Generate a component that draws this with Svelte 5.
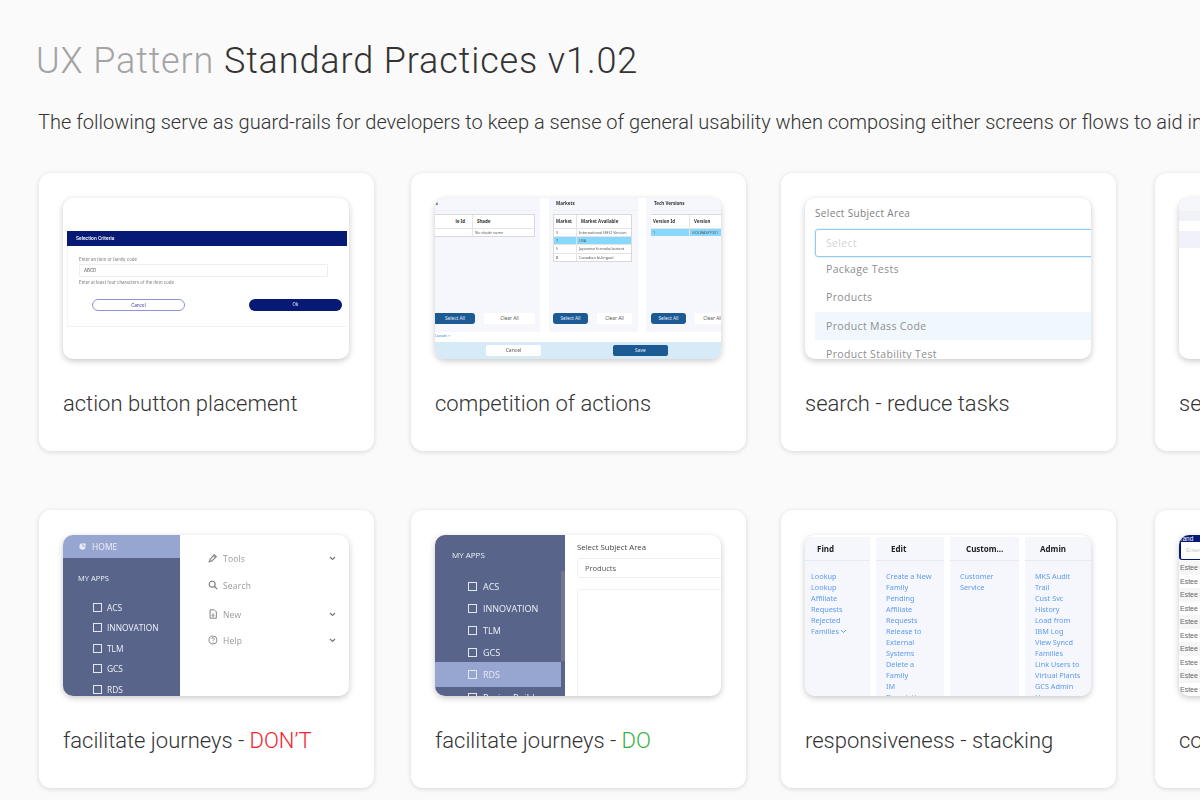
<script>
  const mk1 = [['5','International (EEC) Version',false],['7','USA',true],['5','Japanese formula/variant',false],['8','Canadian bi-lingual',false]];
  const apps1 = ['ACS','INNOVATION','TLM','GCS','RDS'];
  const apps2 = ['ACS','INNOVATION','TLM','GCS','RDS','Recipe Builder'];
  const subjects = ['Package Tests','Products','Product Mass Code','Product Stability Test'];
  const menu = [
    { head: 'Find', w: 'c1', links: ['Lookup','Lookup','Affiliate','Requests','Rejected','Families'] },
    { head: 'Edit', w: 'c2', links: ['Create a New','Family','Pending','Affiliate','Requests','Release to','External','Systems','Delete a','Family','IM','Descriptions'] },
    { head: 'Custom...', w: 'c3', links: ['Customer','Service'] },
    { head: 'Admin', w: 'c4', links: ['MKS Audit','Trail','Cust Svc','History','Load from','IBM Log','View Syncd','Families','Link Users to','Virtual Plants','GCS Admin','Users'] }
  ];
  const estee = Array(10).fill('Estee Lauder');
</script>

<main class="page">
  <h1><span class="dim">UX Pattern</span> Standard Practices v1.02</h1>
  <p class="intro">The following serve as guard-rails for developers to keep a sense of general usability when composing either screens or flows to aid in consistency across applications.</p>

  <section class="grid">
    <article class="card">
      <div class="thumb t1">
        <div class="dlg">
          <div class="dlg-bar">Selection Criteria</div>
          <div class="dlg-body">
            <div class="lbl">Enter an item or family code</div>
            <div class="inp">ABCD</div>
            <div class="lbl hint">Enter at least four characters of the item code</div>
            <div class="btns"><span class="b-cancel">Cancel</span><span class="b-ok">Ok</span></div>
          </div>
        </div>
      </div>
      <h2>action button placement</h2>
    </article>

    <article class="card">
      <div class="thumb t2">
        <div class="panels">
          <div class="panel p1">
            <div class="p-head">a</div>
            <div class="tbl shift">
              <div class="tr th"><span class="td a">le Id</span><span class="td b">Shade</span></div>
              <div class="tr"><span class="td a"></span><span class="td b">No shade name</span></div>
            </div>
            <div class="p-btns"><span class="sel sel1">Select All</span><span class="clr clr1">Clear All</span></div>
          </div>
          <div class="panel p2">
            <div class="p-head">Markets</div>
            <div class="tbl">
              <div class="tr th"><span class="td a">Market</span><span class="td b">Market Available</span></div>
              {#each mk1 as r}
                <div class="tr" class:on={r[2]}><span class="td a">{r[0]}</span><span class="td b">{r[1]}</span></div>
              {/each}
            </div>
            <div class="p-btns"><span class="sel">Select All</span><span class="clr">Clear All</span></div>
          </div>
          <div class="panel p3">
            <div class="p-head">Tech Versions</div>
            <div class="tbl wide">
              <div class="tr th"><span class="td a">Version Id</span><span class="td b">Version</span></div>
              <div class="tr on"><span class="td a">1</span><span class="td b">GOLWASFT001</span></div>
            </div>
            <div class="p-btns"><span class="sel">Select All</span><span class="clr">Clear All</span></div>
          </div>
        </div>
        <div class="t2-link">Cascade >></div>
        <div class="t2-foot"><span class="f-cancel">Cancel</span><span class="f-save">Save</span></div>
      </div>
      <h2>competition of actions</h2>
    </article>

    <article class="card">
      <div class="thumb t3">
        <div class="s-label">Select Subject Area</div>
        <div class="s-input">Select</div>
        <ul class="s-list">
          {#each subjects as s, i}
            <li class:hi={i === 2}>{s}</li>
          {/each}
        </ul>
      </div>
      <h2>search - reduce tasks</h2>
    </article>

    <article class="card">
      <div class="thumb t4">
        <div class="b1"></div><div class="b2"></div><div class="b3"></div><div class="b4"></div>
      </div>
      <h2>search - filter results</h2>
    </article>

    <article class="card">
      <div class="thumb t5">
        <aside class="side5">
          <div class="home">
            <svg width="7" height="7" viewBox="0 0 10 10"><path d="M5 .5a4.500 4.500 0 1 0 4.500 4.500H5z" fill="#e8ebf6"/><path d="M6 0v4h4A4 4 0 0 0 6 0z" fill="#e8ebf6"/></svg>
            HOME
          </div>
          <div class="myapps">MY APPS</div>
          <ul class="apps">
            {#each apps1 as a}<li><i></i>{a}</li>{/each}
          </ul>
        </aside>
        <div class="menu5">
          <div class="mi m-tools">
            <svg width="10" height="10" viewBox="0 0 12 12" fill="none" stroke="#8a8a8a" stroke-width="1.400"><path d="M1.500 10.500l1-3 5-5.500 2.500 2.500-5.500 5z"/><path d="M6.500 3l2.500 2.500"/></svg>
            <span>Tools</span>
            <svg class="chev" width="7" height="5" viewBox="0 0 7 5" fill="none" stroke="#777" stroke-width="1.200"><path d="M1 1l2.500 2.500L6 1"/></svg>
          </div>
          <div class="mi m-search">
            <svg width="10" height="10" viewBox="0 0 12 12" fill="none" stroke="#777" stroke-width="1.300"><circle cx="5" cy="5" r="3.600"/><path d="M7.800 7.800L11 11"/></svg>
            <span>Search</span>
          </div>
          <div class="mi m-new">
            <svg width="10" height="10" viewBox="0 0 12 12" fill="none" stroke="#777" stroke-width="1.100"><path d="M2.500 1h5l2.500 2.500V11h-7.500z"/><path d="M6 5v4M4.500 7.500L6 9l1.500-1.500"/></svg>
            <span>New</span>
            <svg class="chev" width="7" height="5" viewBox="0 0 7 5" fill="none" stroke="#777" stroke-width="1.200"><path d="M1 1l2.500 2.500L6 1"/></svg>
          </div>
          <div class="mi m-help">
            <svg width="10" height="10" viewBox="0 0 12 12" fill="none" stroke="#777" stroke-width="1"><circle cx="6" cy="6" r="4.800"/><path d="M4.500 4.800a1.500 1.500 0 1 1 2.200 1.300c-.5.300-.7.600-.7 1.100M6 8.300v.8"/></svg>
            <span>Help</span>
            <svg class="chev" width="7" height="5" viewBox="0 0 7 5" fill="none" stroke="#777" stroke-width="1.200"><path d="M1 1l2.500 2.500L6 1"/></svg>
          </div>
        </div>
      </div>
      <h2>facilitate journeys - <span class="red">DON’T</span></h2>
    </article>

    <article class="card">
      <div class="thumb t6">
        <aside class="side6">
          <div class="myapps6">MY APPS</div>
          <ul class="apps6">
            {#each apps2 as a}<li class:cur={a === 'RDS'}><i></i>{a}</li>{/each}
          </ul>
          <div class="sb"></div>
        </aside>
        <div class="right6">
          <div class="r-label">Select Subject Area</div>
          <div class="r-input">Products</div>
          <div class="r-box"></div>
        </div>
      </div>
      <h2>facilitate journeys - <span class="green">DO</span></h2>
    </article>

    <article class="card">
      <div class="thumb t7">
        {#each menu as col}
          <div class="col {col.w}">
            <div class="col-h">{col.head}</div>
            <div class="col-l">
              {#each col.links as l}<div>{l}{#if col.head === 'Find' && l === 'Families'}<svg class="fam" width="7" height="5" viewBox="0 0 7 5" fill="none" stroke="#5d9bf0" stroke-width="1"><path d="M1 1l2.500 2.500L6 1"/></svg>{/if}</div>{/each}
            </div>
          </div>
        {/each}
      </div>
      <h2>responsiveness - stacking</h2>
    </article>

    <article class="card">
      <div class="thumb t8">
        <div class="brand-tag">Brand</div>
        <div class="brand-in">Enter</div>
        {#each estee as e}<div class="e-row">{e}</div>{/each}
      </div>
      <h2>combo box - long lists</h2>
    </article>
  </section>
</main>

<style>
  :global(body) { margin: 0; background: #fafafa; overflow: hidden; }
  .page { width: 1200px; height: 800px; overflow: hidden; font-family: Roboto, "Liberation Sans", sans-serif; color: #333; }
  h1 { margin: 0; padding: 40px 0 0 36px; font-size: 36px; line-height: 42px; font-weight: 300; letter-spacing: .88px; white-space: nowrap; color: #333; }
  .dim { color: #a4a4a4; }
  .intro { margin: 0; padding: 28px 0 0 38px; font-size: 20px; line-height: 24px; font-weight: 300; white-space: nowrap; color: #333; }
  .grid { display: grid; grid-template-columns: 372px 370px 374px 335px; grid-auto-rows: 278px; row-gap: 59px; padding: 39px 0 0 39px; width: 1500px; }
  .card { width: 335px; height: 278px; box-sizing: border-box; padding: 25px 24px 0; background: #fff; border-radius: 12px; box-shadow: 0 1px 5px rgba(0,0,0,.14); }
  h2 { margin: 31px 0 0; font-size: 22px; line-height: 28px; font-weight: 300; color: #333; white-space: nowrap; letter-spacing: -.01px; }
  .red { color: #f5222d; }
  .green { color: #2fb344; }
  .thumb { width: 286px; height: 161px; border-radius: 10px; overflow: hidden; background: #fff; box-shadow: 0 2px 6px rgba(0,0,0,.22); box-sizing: border-box; }
  .dlg, .panels, .t2-foot, .t2-link, .side5, .menu5, .side6, .right6, .col { filter: blur(.3px); }

  /* t1 */
  .t1 { padding: 33px 0 0 4px; font-family: Inter, Roboto, sans-serif; }
  .dlg { width: 280px; height: 96px; border-left: 1px solid #f4f4f4; border-bottom: 1px solid #f2f2f2; box-sizing: border-box; }
  .dlg-bar { height: 15px; background: #061a75; color: #fff; font-size: 4.600px; font-weight: 600; line-height: 15px; padding-left: 9px; margin-left: -1px; }
  .dlg-body { padding: 10px 0 0 11px; color: #777; }
  .lbl { font-size: 4.400px; line-height: 7px; }
  .inp { width: 249px; height: 13px; margin-top: 1px; box-sizing: border-box; border: 1px solid #eee; font-size: 4.400px; line-height: 11px; padding-left: 4px; border-radius: 1px; color: #555; }
  .hint { margin-top: 2px; }
  .btns { display: flex; margin-top: 13px; padding-left: 13px; gap: 64px; }
  .b-cancel, .b-ok { width: 93px; height: 12px; box-sizing: border-box; border-radius: 6px; text-align: center; font-size: 4.400px; line-height: 11px; }
  .b-cancel { border: 1px solid #8d93d0; color: #2a3590; }
  .b-ok { background: #061a75; color: #fff; line-height: 12px; }

  /* t2 */
  .t2 { font-family: "Noto Sans", sans-serif; }
  .panels { display: flex; height: 134px; }
  .panel { background: #f6f7fc; height: 134px; position: relative; box-sizing: border-box; overflow: hidden; }
  .p1 { width: 105px; margin-right: 9px; }
  .p2 { width: 89px; margin-right: 8px; padding-left: 4px; }
  .p3 { width: 75px; padding-left: 5px; }
  .p-head { height: 12px; line-height: 11px; padding: 0 0 0 3px; font-size: 4.500px; font-weight: 700; color: #333; margin-bottom: 3px; border-bottom: 1px solid #f0f0f6; }
  .p1 .p-head { padding-left: 0; }
  .tbl { width: 79px; background: #fff; border: 1px solid #d9d9d9; box-sizing: border-box; margin-top: 0; }
  .tbl.shift { width: 100px; border-left: 0; }
  .tbl.wide { width: 100px; border-width: 1px 0 0 0; }
  .tr { display: flex; font-size: 3.800px; line-height: 7px; height: 8.200px; color: #555; border-top: 1px solid #e5e5e5; box-sizing: border-box; }
  .tr.th { height: 13px; line-height: 12px; font-weight: 700; font-size: 4.400px; border-top: 0; color: #333; }
  .td.a { width: 23px; padding-left: 2px; box-sizing: border-box; flex: none; border-right: 1px solid #e5e5e5; overflow: hidden; }
  .shift .td.a { width: 38px; text-align: right; padding-right: 7px; }
  .wide .td.a { width: 39px; }
  .td.b { padding-left: 2px; white-space: nowrap; }
  .th .td.b { padding-left: 4px; }
  .tr.on { background: #86d8fd; }
  .p-btns { position: absolute; left: 4px; top: 115px; display: flex; gap: 9px; }
  .p3 .p-btns { left: 5px; }
  .sel { width: 35px; height: 11px; border-radius: 3px; background: #1c5a94; color: #e6eef8; font-size: 4.800px; line-height: 11px; text-align: center; }
  .clr { width: 35px; height: 11px; background: #fff; color: #555; font-size: 4.800px; line-height: 11px; text-align: center; }
  .p-btns:has(.sel1) { left: 0; }
  .sel1 { width: 40px; border-radius: 0 3px 3px 0; }
  .clr1 { width: 51px; }
  .t2-link { height: 10px; font-size: 3px; line-height: 9px; padding-top: 0; color: #3b7fc4; }
  .t2-foot { height: 17px; background: #d6ebf7; display: flex; align-items: center; padding-left: 51px; gap: 72px; }
  .f-cancel, .f-save { width: 55px; height: 11px; border-radius: 2px; font-size: 5px; line-height: 11px; text-align: center; }
  .f-cancel { background: #fff; color: #555; }
  .f-save { background: #1c5a94; color: #e6eef8; }

  /* t3 */
  .t3 { font-family: "Open Sans", sans-serif; padding: 10px 0 0 10px; color: #8a8a8a; }
  .s-label { font-size: 10px; line-height: 11px; letter-spacing: .35px; color: #808080; }
  .s-input { width: 290px; height: 28px; margin-top: 10px; box-sizing: border-box; border: 1px solid #93c9f2; border-radius: 3px; box-shadow: 0 0 2px #a5d4f6; font-size: 10.500px; line-height: 26px; padding-left: 10px; color: #d4d4d4; letter-spacing: .35px; }
  .s-list { list-style: none; margin: 0; padding: 0; }
  .s-list li { height: 28px; line-height: 28px; padding-left: 11px; font-size: 10.500px; letter-spacing: .35px; color: #8e8e8e; }
  .s-list li:first-child { height: 27px; line-height: 24px; }
  .s-list li:nth-child(2) { line-height: 26px; }
  .s-list li.hi { background: #f1f8fd; }

  /* t4 */
  .t4 .b1 { height: 13px; background: #f6f7fb; }
  .t4 .b2 { height: 10px; background: #f1f2f8; }
  .t4 .b3 { height: 10px; background: #fff; }
  .t4 .b4 { height: 17px; background: #f1f2f9; }

  /* t5 */
  .t5 { display: flex; font-family: "Open Sans", sans-serif; }
  .side5 { width: 117px; height: 161px; background: #59648a; color: #f2f3f8; flex: none; overflow: hidden; }
  .home { height: 23px; background: #97a5d1; display: flex; align-items: center; gap: 6px; padding-left: 16px; font-size: 8.500px; color: #eef0f9; }
  .myapps { font-size: 7.500px; line-height: 10px; padding: 15px 0 0 15px; font-weight: 500; }
  .apps { list-style: none; margin: 14px 0 0; padding: 0 0 0 30px; }
  .apps li { display: flex; align-items: center; gap: 5px; height: 20.500px; font-size: 8.400px; font-weight: 500; }
  .apps li i, .apps6 li i { width: 7px; height: 7px; border: 1px solid #e4e6f0; flex: none; }
  .menu5 { flex: 1; padding: 15px 13px 0 28px; color: #999; font-size: 8.500px; letter-spacing: .2px; }
  .mi { display: flex; align-items: center; gap: 5px; height: 16px; }
  .mi .chev { margin-left: auto; }
  .m-search { margin-top: 11px; }
  .m-new { margin-top: 13px; }
  .m-help { margin-top: 10px; }

  /* t6 */
  .t6 { display: flex; font-family: "Open Sans", sans-serif; }
  .side6 { width: 130px; height: 161px; background: #59648a; color: #eef0f7; flex: none; position: relative; overflow: hidden; }
  .myapps6 { font-size: 8px; line-height: 10px; padding: 15px 0 0 17px; font-weight: 500; }
  .apps6 { list-style: none; margin: 15px 0 0; padding: 0; width: 126px; }
  .apps6 li { display: flex; align-items: center; gap: 6px; height: 22px; padding-left: 33px; font-size: 9px; font-weight: 500; }
  .apps6 li.cur { background: #97a5d1; height: 25px; margin-top: -1px; margin-bottom: -1px; color: #e6e9f6; }
  .sb { position: absolute; right: 0; top: 36px; width: 4px; height: 90px; background: #72788f; }
  .right6 { flex: 1; padding: 7px 0 0 12px; overflow: hidden; }
  .r-label { font-size: 7.800px; line-height: 10px; color: #444; }
  .r-input { width: 160px; height: 20px; margin-top: 6px; box-sizing: border-box; border: 1px solid #eee; border-radius: 3px; font-size: 7.500px; line-height: 18px; padding-left: 7px; color: #555; }
  .r-box { width: 160px; height: 110px; margin-top: 11px; border: 1px solid #f0f0f0; border-radius: 3px; }

  /* t7 */
  .t7 { display: flex; font-family: "Noto Sans", sans-serif; padding-top: 2px; gap: 6px; }
  .col { background: #f6f7fc; height: 200px; flex: none; overflow: hidden; }
  .c1 { width: 65px; }
  .c2 { width: 68px; }
  .c3 { width: 69px; }
  .c4 { width: 66px; }
  .col-h { height: 24px; box-sizing: border-box; border-bottom: 1px solid #e9e9ef; padding-left: 15px; font-size: 8px; line-height: 23px; font-weight: 700; color: #222; }
  .c1 .col-h { padding-left: 12px; }
  .c3 .col-h { padding-left: 16px; }
  .col-l { padding: 10px 0 0 10px; font-size: 7.300px; line-height: 11px; color: #5d9bf0; white-space: nowrap; }
  .c1 .col-l { padding-left: 6px; }
  .fam { margin-left: 1px; }

  /* t8 */
  .t8 { font-family: "Liberation Sans", sans-serif; overflow: hidden; }
  .brand-tag { height: 7px; background: #061a75; color: #fff; font-size: 6.500px; line-height: 7px; text-indent: -3px; border-radius: 4px 0 0 0; }
  .brand-in { height: 18px; box-sizing: border-box; border: 1px solid #061a75; border-left-width: 2px; border-top: 0; border-right: 0; border-radius: 0 0 0 3px; padding-left: 5px; font-size: 6px; line-height: 16px; color: #ccc; margin-bottom: 1px; }
  .e-row { height: 13.500px; line-height: 13.500px; font-size: 7px; color: #666; padding-left: 1px; white-space: nowrap; }
  .e-row:nth-child(odd) { background: #f7f6f6; }
</style>
